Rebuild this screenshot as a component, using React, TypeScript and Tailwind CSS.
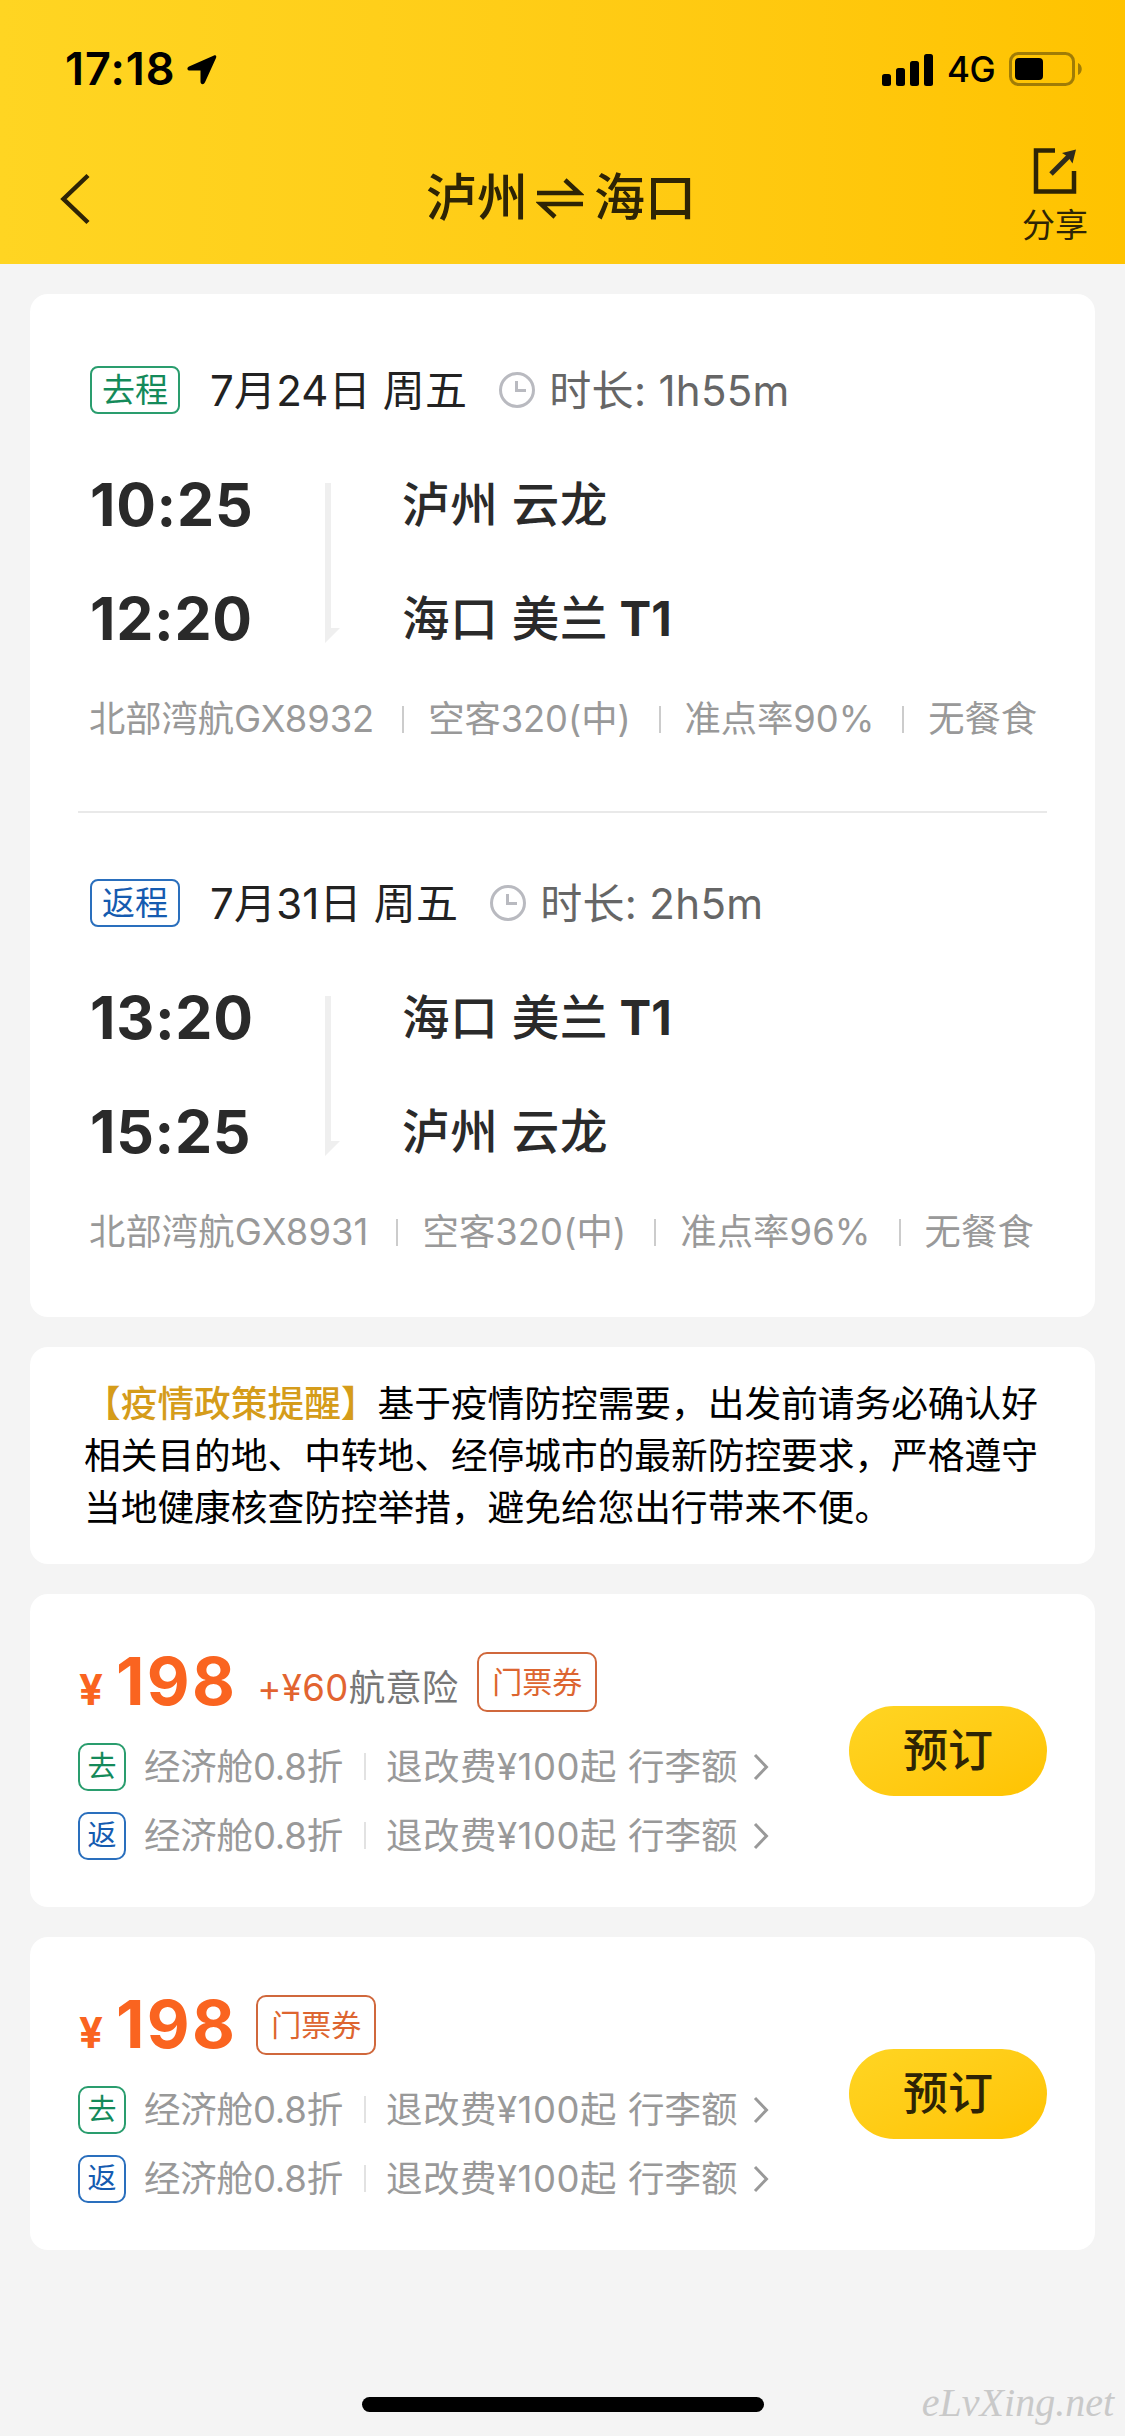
import clsx from 'clsx';

type Airport = {
  name: string;
  terminal?: string;
};

type Leg = {
  tag: string;
  tagClass: string;
  date: string;
  duration: string;
  depart: string;
  arrive: string;
  from: Airport;
  to: Airport;
  details: string[];
  detailsClass: string;
};

type Fare = {
  price: string;
  insurance?: string;
};

const legs: Leg[] = [
  {
    tag: '去程',
    tagClass: 'border-[#2a9d6e] text-[#148a5a]',
    date: '7月24日 周五',
    duration: '时长: 1h55m',
    depart: '10:25',
    arrive: '12:20',
    from: { name: '泸州 云龙' },
    to: { name: '海口 美兰', terminal: 'T1' },
    details: ['北部湾航GX8932', '空客320(中)', '准点率90%', '无餐食'],
    detailsClass: 'tracking-[-0.05px]',
  },
  {
    tag: '返程',
    tagClass: 'border-[#2a6fbd] text-[#155bb0]',
    date: '7月31日 周五',
    duration: '时长: 2h5m',
    depart: '13:20',
    arrive: '15:25',
    from: { name: '海口 美兰', terminal: 'T1' },
    to: { name: '泸州 云龙' },
    details: ['北部湾航GX8931', '空客320(中)', '准点率96%', '无餐食'],
    detailsClass: 'tracking-[0.12px]',
  },
];

const fares: Fare[] = [{ price: '198', insurance: '+¥60' }, { price: '198' }];

const StatusBar = () => (
  <div className="flex h-[138px] items-start justify-between pt-[42px] pr-[41px] pl-[65px] text-black">
    <div className="flex items-center">
      <span className="w-[122px] text-[45px] leading-[54px] font-semibold tracking-[1px]">
        17:18
      </span>
      <svg width="30" height="31" viewBox="0 0 30 31">
        <path
          d="M27 1.5 2 12.5C-.4 13.800 0 16.500 2.800 16.500H13.500V27.500C13.500 30.800 16.800 31 18 28.300L29 4C29.800 2 28.700.8 27 1.500Z"
          fill="currentColor"
        />
      </svg>
    </div>
    <div className="flex items-center">
      <svg width="52" height="33" viewBox="0 0 52 33" fill="currentColor">
        <rect x="0" y="21" width="9" height="12" rx="2.500" />
        <rect x="14" y="15" width="9" height="18" rx="2.500" />
        <rect x="28" y="8" width="9" height="25" rx="2.500" />
        <rect x="42" y="1" width="9" height="32" rx="2.500" />
      </svg>
      <span className="ml-[13px] w-[62px] text-[35px] leading-[54px] font-medium tracking-[-0.5px]">
        4G
      </span>
      <svg width="75" height="34" viewBox="0 0 75 34">
        <rect x="1.500" y="1.500" width="63" height="31" rx="8" fill="none" stroke="#a07c06" strokeWidth="3" />
        <rect x="6" y="6" width="28" height="22" rx="4" fill="#000" />
        <path d="M69 11c5 2 5 10 0 12Z" fill="#a07c06" />
      </svg>
    </div>
  </div>
);

const Header = () => (
  <header className="h-[264px] bg-gradient-to-r from-[#ffd522] to-[#ffc300]">
    <StatusBar />
    <div className="flex h-[126px] items-start justify-between pl-[60px] text-[#2e2405]">
      <svg className="mt-[35px]" width="31" height="52" viewBox="0 0 31 52" fill="none">
        <path d="M28 2.500 3.500 26 28 49.500" stroke="currentColor" strokeWidth="4.500" />
      </svg>
      <div className="mt-[25px] ml-[9px] flex items-center text-[51px] leading-[70px] font-medium">
        泸州
        <svg className="mr-[10px] ml-[8px]" width="48" height="42" viewBox="0 0 48 42" fill="none">
          <path d="M1 16H43L29 3M47 27H5L19 40" stroke="currentColor" strokeWidth="4.500" />
        </svg>
        海口
      </div>
      <div className="mr-[37px] flex flex-col items-center pt-[8px]">
        <svg width="46" height="48" viewBox="0 0 46 48" fill="none">
          <path d="M23 4.500H4V45.500H42V25" stroke="currentColor" strokeWidth="4.500" />
          <path d="M19 28 37 10" stroke="#2f2b1c" strokeWidth="5" />
          <path d="M44 3.500 40.500 17.500 37.500 13 34 9.500 30 7Z" fill="#2f2b1c" />
        </svg>
        <span className="mt-[7px] text-[33px] leading-[48px]">分享</span>
      </div>
    </div>
  </header>
);

const Divider = ({ className }: { className: string }) => (
  <span className={clsx('w-[2px] shrink-0', className)} />
);

const AirportName = ({ airport }: { airport: Airport }) => (
  <div>
    {airport.name}
    {airport.terminal && <span className="font-bold tracking-normal"> {airport.terminal}</span>}
  </div>
);

const LegBlock = ({ leg }: { leg: Leg }) => (
  <section className="pl-[60px]">
    <div className="flex h-[60px] items-center">
      <span
        className={clsx(
          '-mt-[2px] flex h-[48px] w-[90px] items-center justify-center rounded-[8px] border-2 text-[33px] leading-none',
          leg.tagClass,
        )}
      >
        {leg.tag}
      </span>
      <span className="-mt-[2px] ml-[30px] text-[42px] tracking-[0.2px] text-[#222]">{leg.date}</span>
      <svg className="-mt-[2px] ml-[31px]" width="38" height="38" viewBox="0 0 38 38" fill="none">
        <circle cx="19" cy="19" r="16.500" stroke="#b9bac0" strokeWidth="3" />
        <path d="M18.500 10V19.500H28" stroke="#b9bac0" strokeWidth="3" />
      </svg>
      <span className="-mt-[2px] ml-[13px] text-[42px] tracking-[0.3px] text-[#666]">{leg.duration}</span>
    </div>
    <div className="mt-[27px] flex h-[228px] text-[#2a2a2a]">
      <div className="w-[235px] text-[59px] leading-[114px] font-bold tracking-[0.7px]">
        <div>{leg.depart}</div>
        <div>{leg.arrive}</div>
      </div>
      <svg className="mt-[35px]" width="16" height="160" viewBox="0 0 16 160" fill="#efefef">
        <path d="M0 0H6V145H15L0 160Z" />
      </svg>
      <div className="ml-[61px] text-[47.500px] leading-[114px] font-medium tracking-[0.7px]">
        <AirportName airport={leg.from} />
        <AirportName airport={leg.to} />
      </div>
    </div>
    <div
      className={clsx(
        'mt-[18px] -ml-px flex h-[50px] items-center text-[36.300px] text-[#999]',
        leg.detailsClass,
      )}
    >
      {leg.details.map((item, i) => (
        <div key={item} className="flex items-center">
          {i > 0 && <Divider className="mr-[24px] ml-[28px] h-[27px] bg-[#ccc]" />}
          <span>{item}</span>
        </div>
      ))}
    </div>
  </section>
);

const FareRow = ({ tag, tagClass }: { tag: string; tagClass: string }) => (
  <div className="flex h-[69px] items-center text-[36.500px] text-[#999]">
    <span
      className={clsx(
        'flex h-[48px] w-[48px] items-center justify-center rounded-[10px] border-2 text-[29px] leading-none',
        tagClass,
      )}
    >
      {tag}
    </span>
    <span className="ml-[18px] w-[220px] pt-px tracking-[-0.2px]">经济舱0.8折</span>
    <Divider className="h-[27px] bg-[#e2e2e2]" />
    <span className="ml-[20px] w-[242px] pt-px tracking-[0.5px]">退改费¥100起</span>
    <span className="pt-px">行李额</span>
    <svg className="ml-[14px]" width="18" height="28" viewBox="0 0 18 28" fill="none">
      <path d="M3 2 14.500 14 3 26" stroke="#999" strokeWidth="3" />
    </svg>
  </div>
);

const FareCard = ({ fare }: { fare: Fare }) => (
  <section className="flex h-[313px] items-center justify-between rounded-[18px] bg-white pr-[48px] pl-[48px]">
    <div className="h-full pt-[46px]">
      <div className="flex h-[84px] items-center">
        <div className="flex items-baseline pt-[7px] leading-[84px] font-bold text-[#fa6420]">
          <span className="w-[38px] pl-px text-[42px]">¥</span>
          <span className="text-[66px] tracking-[2.300px]">{fare.price}</span>
        </div>
        {fare.insurance && (
          <span className="mt-[13px] ml-[20px] text-[36.500px] text-[#777]">
            <span className="tracking-[0.4px] text-[#e26430]">{fare.insurance}</span>
            航意险
          </span>
        )}
        <span className="ml-[19px] flex h-[60px] w-[120px] items-center justify-center rounded-[10px] border-2 border-[#d0683c] text-[30px] leading-none text-[#dd6530]">
          门票券
        </span>
      </div>
      <div className="mt-[8px]">
        <FareRow tag="去" tagClass="border-[#2a9d6e] text-[#148a5a]" />
        <FareRow tag="返" tagClass="border-[#2a6fbd] text-[#155bb0]" />
      </div>
    </div>
    <button className="h-[90px] w-[198px] rounded-full bg-gradient-to-br from-[#ffd522] to-[#ffc300] text-[45px] leading-none font-medium text-[#2e2405]">
      预订
    </button>
  </section>
);

const App = () => {
  return (
    <div className="flex h-[2436px] w-[1125px] flex-col overflow-hidden bg-[#f4f4f4] font-[Inter,'Noto_Sans_CJK_SC',sans-serif] whitespace-nowrap">
      <Header />
      <main className="flex flex-col gap-[30px] px-[30px] pt-[30px]">
        <div className="h-[1023px] rounded-[18px] bg-white pt-[67px]">
          <LegBlock leg={legs[0]} />
          <div className="mx-[48px] mt-[67px] mb-[61px] h-[2px] bg-[#e9e9e9]" />
          <LegBlock leg={legs[1]} />
        </div>

        <section className="h-[217px] rounded-[18px] bg-white pt-[31px] pl-[54px] text-[36.700px] leading-[52px] text-black">
          <p>
            <span className="font-medium text-[#d59c1a]">【疫情政策提醒】</span>
            基于疫情防控需要，出发前请务必确认好
          </p>
          <p>相关目的地、中转地、经停城市的最新防控要求，严格遵守</p>
          <p>当地健康核查防控举措，避免给您出行带来不便。</p>
        </section>

        {fares.map((fare, i) => (
          <FareCard key={i} fare={fare} />
        ))}
      </main>

      <footer className="mt-auto grid h-[60px] grid-cols-[362px_402px_1fr] items-start">
        <div className="col-start-2 mt-[21px] h-[15px] rounded-full bg-black" />
        <span className="mt-[2px] mr-[11px] text-right font-['Liberation_Serif',serif] text-[40px] leading-[50px] text-[#c9c9c9] italic">
          eLvXing.net
        </span>
      </footer>
    </div>
  );
};

export default App;
